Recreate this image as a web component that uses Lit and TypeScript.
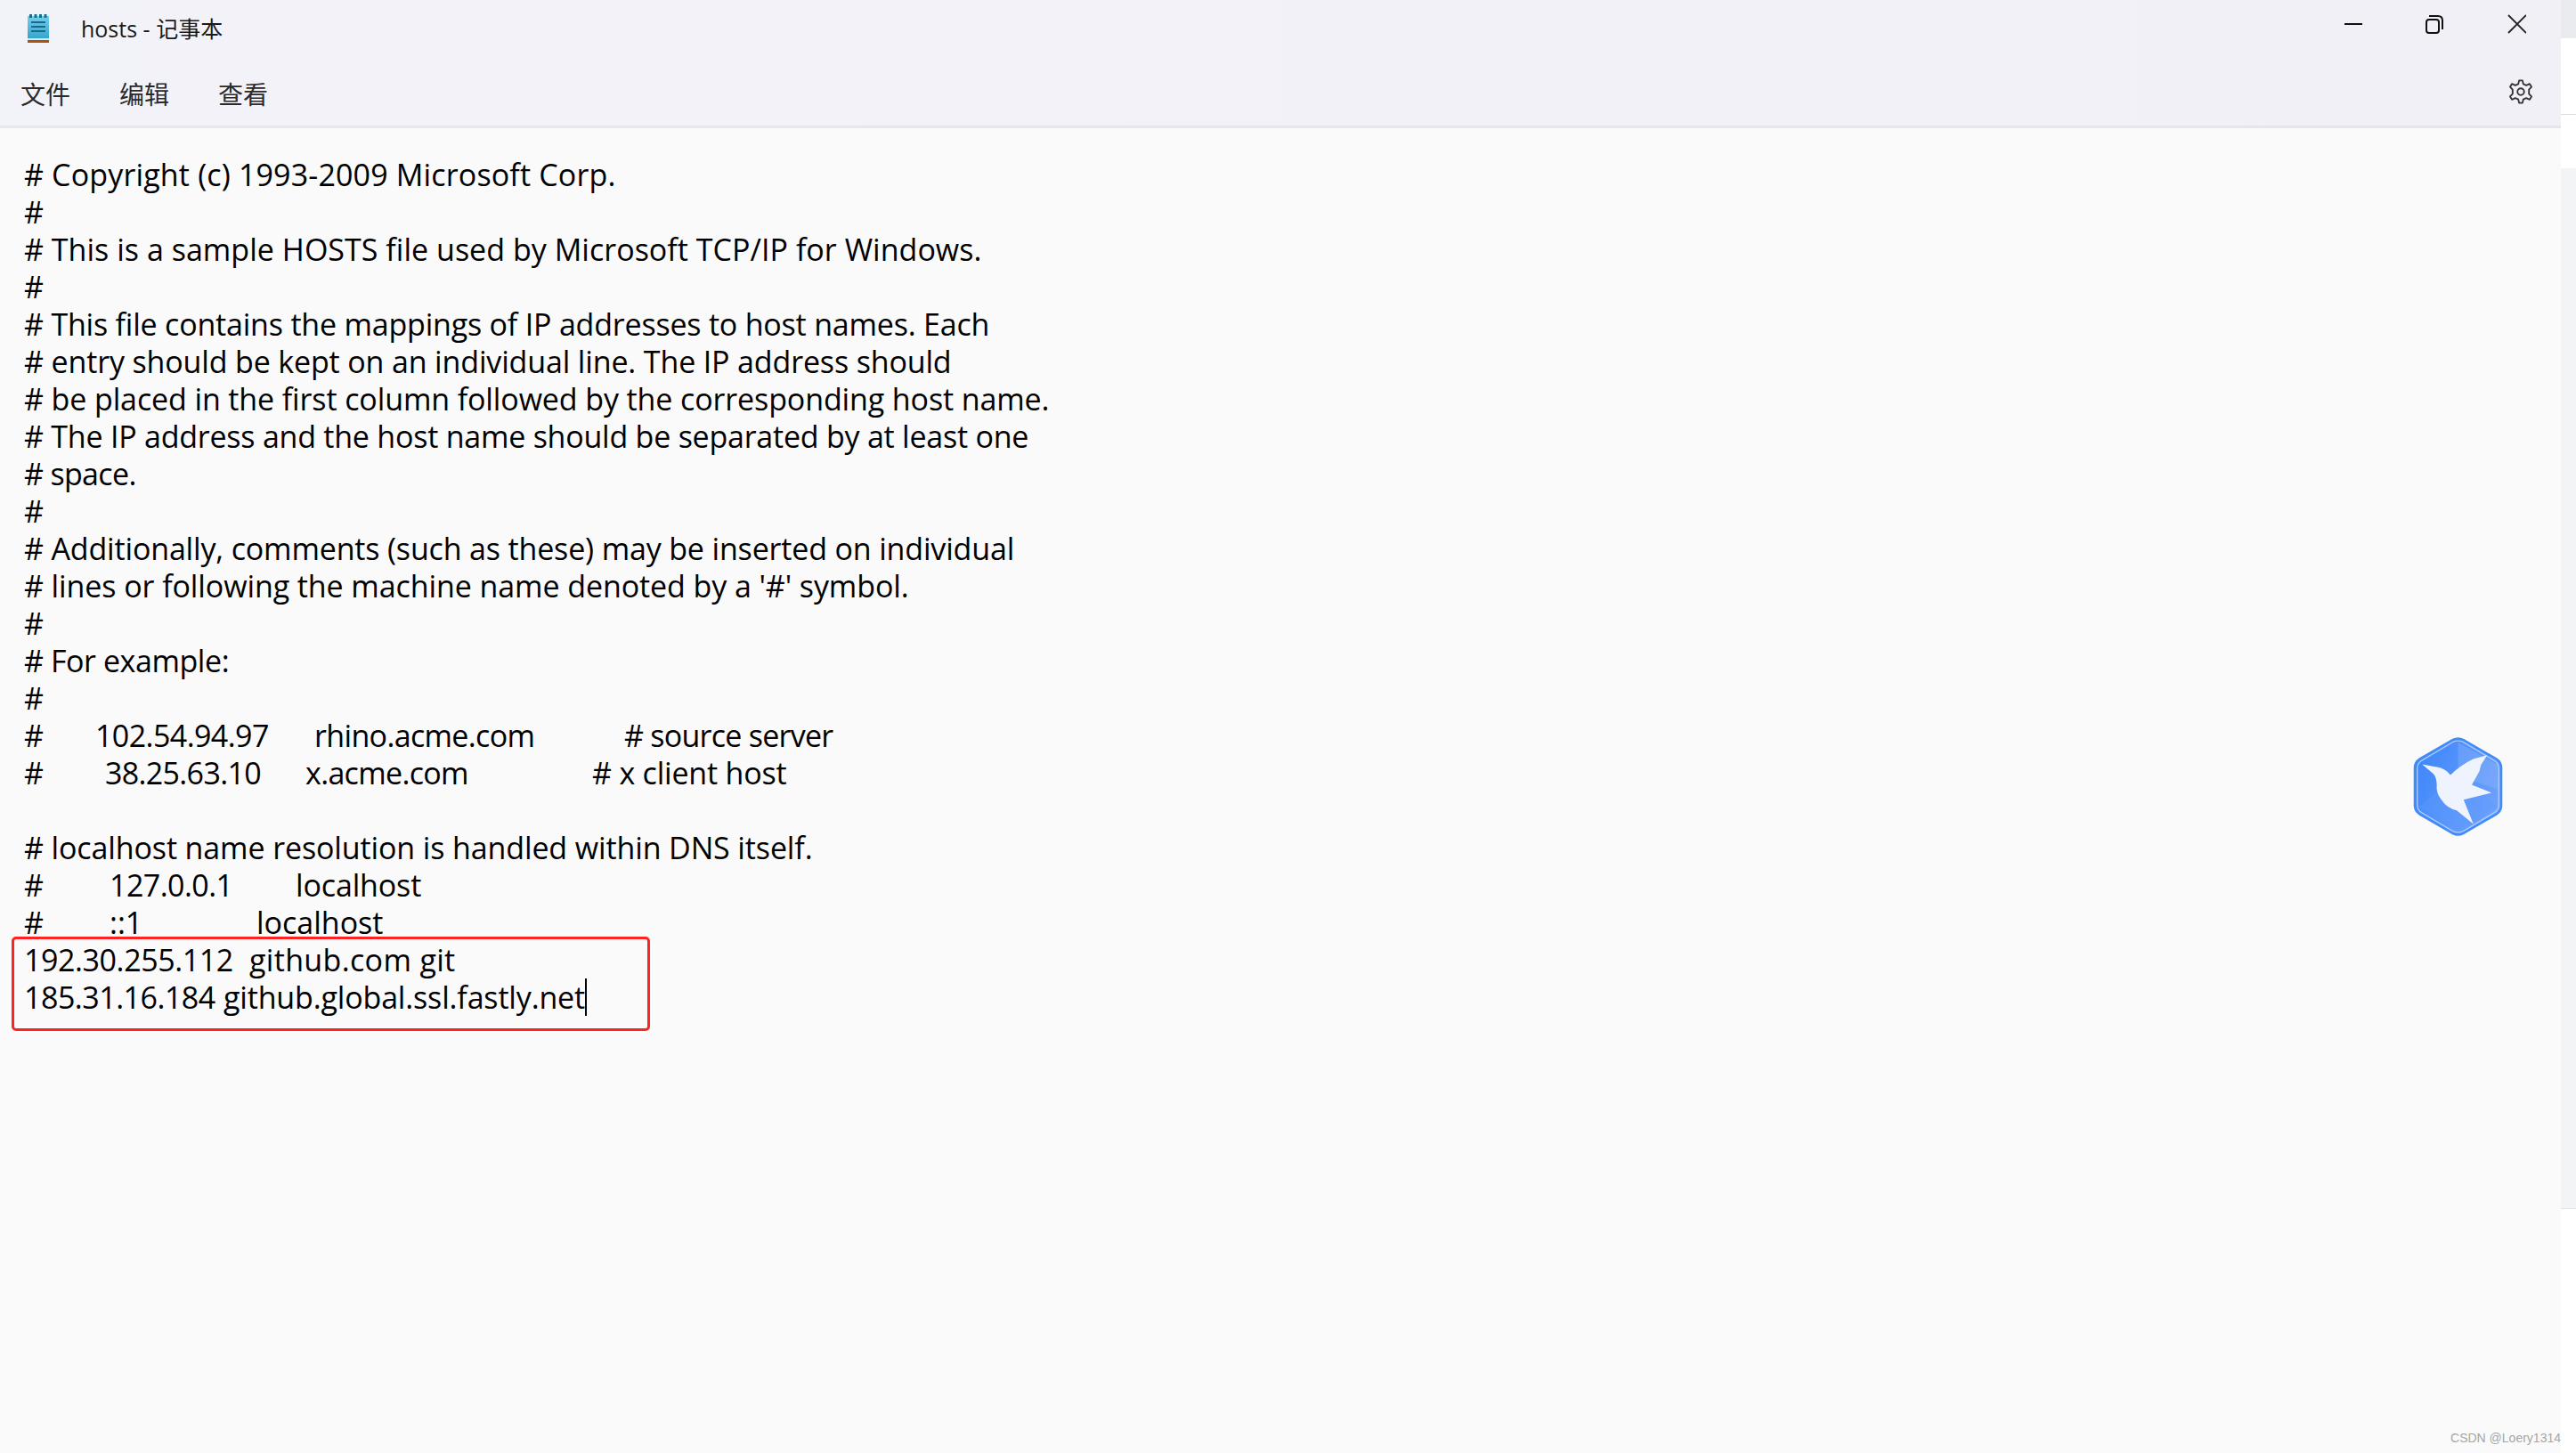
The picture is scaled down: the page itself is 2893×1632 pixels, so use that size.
import { LitElement, html, css } from "lit";
import { customElement } from "lit/decorators.js";

/** A segment: text, letter-spacing, and (for column rows) a fixed column width. */
type Seg = { t: string; ls?: number; w?: number };
const LINES: Seg[][] = [
  [{ t: "# Copyright (c) 1993-2009 Microsoft Corp.", ls: 0.157 }],
  [{ t: "#" }],
  [{ t: "# This is a sample HOSTS file used by Microsoft TCP/IP for Windows.", ls: 0.03 }],
  [{ t: "#" }],
  [{ t: "# This file contains the mappings of IP addresses to host names. Each", ls: -0.2 }],
  [{ t: "# entry should be kept on an individual line. The IP address should", ls: -0.146 }],
  [{ t: "# be placed in the first column followed by the corresponding host name.", ls: -0.115 }],
  [{ t: "# The IP address and the host name should be separated by at least one", ls: -0.23 }],
  [{ t: "# space.", ls: -0.67 }],
  [{ t: "#" }],
  [{ t: "# Additionally, comments (such as these) may be inserted on individual", ls: -0.16 }],
  [{ t: "# lines or following the machine name denoted by a '#' symbol.", ls: -0.09 }],
  [{ t: "#" }],
  [{ t: "# For example:", ls: -0.43 }],
  [{ t: "#" }],
  [{ t: "#", w: 80 }, { t: "102.54.94.97", ls: -0.58, w: 246 }, { t: "rhino.acme.com", ls: -0.65, w: 348 }, { t: "# source server", ls: -0.74 }],
  [{ t: "#", w: 91 }, { t: "38.25.63.10", ls: -0.67, w: 225 }, { t: "x.acme.com", ls: -0.67, w: 322 }, { t: "# x client host", ls: -0.2 }],
  [{ t: " " }],
  [{ t: "# localhost name resolution is handled within DNS itself.", ls: -0.12 }],
  [{ t: "#", w: 96 }, { t: "127.0.0.1", ls: -0.55, w: 209 }, { t: "localhost", ls: -0.14 }],
  [{ t: "#", w: 96 }, { t: "::1", w: 165 }, { t: "localhost" }],
  [{ t: "192.30.255.112", ls: -0.42, w: 253 }, { t: "github.com git", ls: 0.34 }],
  [{ t: "185.31.16.184", ls: -0.5, w: 224 }, { t: "github.global.ssl.fastly.net", ls: -0.16 }],
];

@customElement("app-root")
export class AppRoot extends LitElement {
  static styles = css`
    :host { display: block; width: 2893px; height: 1632px; overflow: hidden; }
    .page { display: flex; width: 2893px; height: 1632px; background: #fafafa; }
    .win { flex: 1; min-width: 0; display: flex; flex-direction: column; position: relative; }
    .strip { width: 17px; display: flex; flex-direction: column; }
    .s1 { height: 43px; background: #e9ebef; }
    .s2 { height: 85px; background: #fff; border-bottom: 1px solid #dcdcdc; }
    .s3 { height: 60px; background: #fff; }
    .s4 { flex: 1; background: #f3f4f6; border-bottom: 1px solid #e4e4e4; }
    .s5 { height: 274px; background: #fff; }
    .chrome { height: 141px; flex: none; background: linear-gradient(90deg, #f2f3f9, #f2f0f7); border-bottom: 3px solid #e6e6ec; display: flex; flex-direction: column; }
    .title { height: 64px; display: flex; align-items: center; font: 25px "Open Sans", "Noto Sans CJK SC", sans-serif; color: #1a1a1a; }
    .app { width: 24px; height: 32px; margin-left: 31px; margin-right: 36px; flex: none; }
    .title .text { flex: 1; padding-bottom: 3px; }
    .capt { display: flex; align-items: center; padding: 0 39px 10px 0; }
    .capt svg { display: block; }
    .menu { flex: 1; display: flex; align-items: center; gap: 55px; padding: 4px 30px 0 23px; font: 28px "Noto Sans CJK SC", sans-serif; color: #2a2a2a; }
    .menu .sp { flex: 1; }
    .gear { margin-top: -4px; }
    .edit { flex: 1; padding: 31px 0 0 27px; font: 34px/42px "Open Sans", sans-serif; color: #000; }
    .ln { white-space: pre; height: 42px; display: flex; align-items: flex-start; }
    .seg { white-space: pre; flex: none; }
    .mark { position: absolute; left: 13px; top: 1052px; width: 717px; height: 106px; border: 3px solid #f22; border-radius: 5px; box-sizing: border-box; }
    .caret { display: block; flex: none; width: 2px; height: 42px; background: #000; }
    .bird { position: absolute; left: 2710px; top: 828px; width: 101px; height: 111px; }
    .wm { position: absolute; right: 0; bottom: 9px; font: 14px "Liberation Sans", sans-serif; color: #a6a6a6; }
  `;

  render() {
    return html`<div class="page">
      <div class="win">
        <div class="chrome">
          <div class="title">
            <svg class="app" viewBox="0 0 24 32">
              <defs><linearGradient id="n" x1="0" y1="0" x2="0" y2="1"><stop offset="0" stop-color="#74cdea"/><stop offset="1" stop-color="#36a6cd"/></linearGradient></defs>
              <rect x="0" y="2" width="24" height="25" fill="url(#n)"/>
              <g fill="#14708f"><rect x="2" y="0" width="3" height="4"/><rect x="7.5" y="0" width="3" height="4"/><rect x="13" y="0" width="3" height="4"/><rect x="18.5" y="0" width="3" height="4"/></g>
              <g fill="#17698c"><rect x="4" y="8" width="16" height="2"/><rect x="4" y="13" width="16" height="2"/><rect x="4" y="18" width="16" height="2"/></g>
              <rect x="0" y="27" width="24" height="2" fill="#d8e6ea"/>
              <rect x="0" y="29" width="24" height="3" fill="#a9540f"/>
            </svg>
            <span class="text">hosts - 记事本</span>
            <div class="capt">
              <svg width="204" height="30" viewBox="0 0 204 30">
                <rect x="0" y="14" width="20" height="2" fill="#111"/>
                <rect x="92" y="10" width="14" height="15" rx="3" fill="none" stroke="#111" stroke-width="2"/>
                <path d="M95 6 H105 Q110 6 110 11 V21" fill="none" stroke="#111" stroke-width="2"/>
                <path d="M184 5 L204 25 M204 5 L184 25" stroke="#222" stroke-width="1.8" fill="none"/>
              </svg>
            </div>
          </div>
          <div class="menu"><span>文件</span><span>编辑</span><span>查看</span><span class="sp"></span>
            <svg class="gear" width="30" height="30" viewBox="0 0 32 32">
              <path d="M14 2.5 L18 2.5 L19 6.8 L22.6 8.4 L26.6 6.6 L28.8 10.2 L25.8 13.4 L25.8 18.6 L28.8 21.8 L26.6 25.4 L22.6 23.6 L19 25.2 L18 29.5 L14 29.5 L13 25.2 L9.4 23.6 L5.4 25.4 L3.2 21.8 L6.2 18.6 L6.2 13.4 L3.2 10.2 L5.4 6.6 L9.4 8.4 L13 6.8 Z" fill="none" stroke="#333" stroke-width="2" stroke-linejoin="round"/>
              <circle cx="16" cy="16" r="4" fill="none" stroke="#333" stroke-width="2"/>
            </svg>
          </div>
        </div>
        <div class="edit">
          ${LINES.map((l, i) => html`<div class="ln">${l.map((s) => html`<span class="seg" style="letter-spacing:${s.ls ?? 0}px;${s.w ? `width:${s.w}px` : ""}">${s.t}</span>`)}${i === LINES.length - 1 ? html`<span class="caret"></span>` : ""}</div>`)}
        </div>
        <div class="mark"></div>
        <svg class="bird" viewBox="0 0 106 114" preserveAspectRatio="none">
          <defs><linearGradient id="h" x1="0" y1="0.2" x2="1" y2="0.7"><stop offset="0" stop-color="#3d86fa"/><stop offset="1" stop-color="#6fa2fb"/></linearGradient></defs>
          <path d="M47 3 Q53 0 59 3 L98 25 Q104 29 104 35 V79 Q104 85 98 89 L59 111 Q53 114 47 111 L8 89 Q2 85 2 79 V35 Q2 29 8 25 Z" fill="url(#h)" stroke="#3f8cf8" stroke-width="2.5"/>
          <path d="M53 6 L100 32 V60 L53 45 Z" fill="#9cbcfd" fill-opacity=".3"/>
          <path d="M53 45 L100 80 L53 108 L6 80 Z" fill="#5f9afb" fill-opacity=".35"/>
          <path d="M47 5.5 Q53 3 59 5.5 L96 27 Q101 30 101 36 V78 Q101 84 96 87 L59 108.5 Q53 111 47 108.5 L10 87 Q5 84 5 78 V36 Q5 30 10 27 Z" fill="none" stroke="#a9c7fd" stroke-width="1.5"/>
          <path d="M10.8 31.4 L28 34.5 Q38 36 44 43.6 Q56 32 71 25.1 L87.3 20.9 L80 32 L78.3 39 L69.3 55 L92.6 64.2 L59.6 72.2 L71.1 100.2 L51.4 84.5 Q40 82 33.4 72.2 Q27 64 28 56.5 Q28 47 24.4 42.5 Z" fill="#eef3fd"/>
        </svg>
        <div class="wm">CSDN @Loery1314</div>
      </div>
      <div class="strip"><div class="s1"></div><div class="s2"></div><div class="s3"></div><div class="s4"></div><div class="s5"></div></div>
    </div>`;
  }
}
